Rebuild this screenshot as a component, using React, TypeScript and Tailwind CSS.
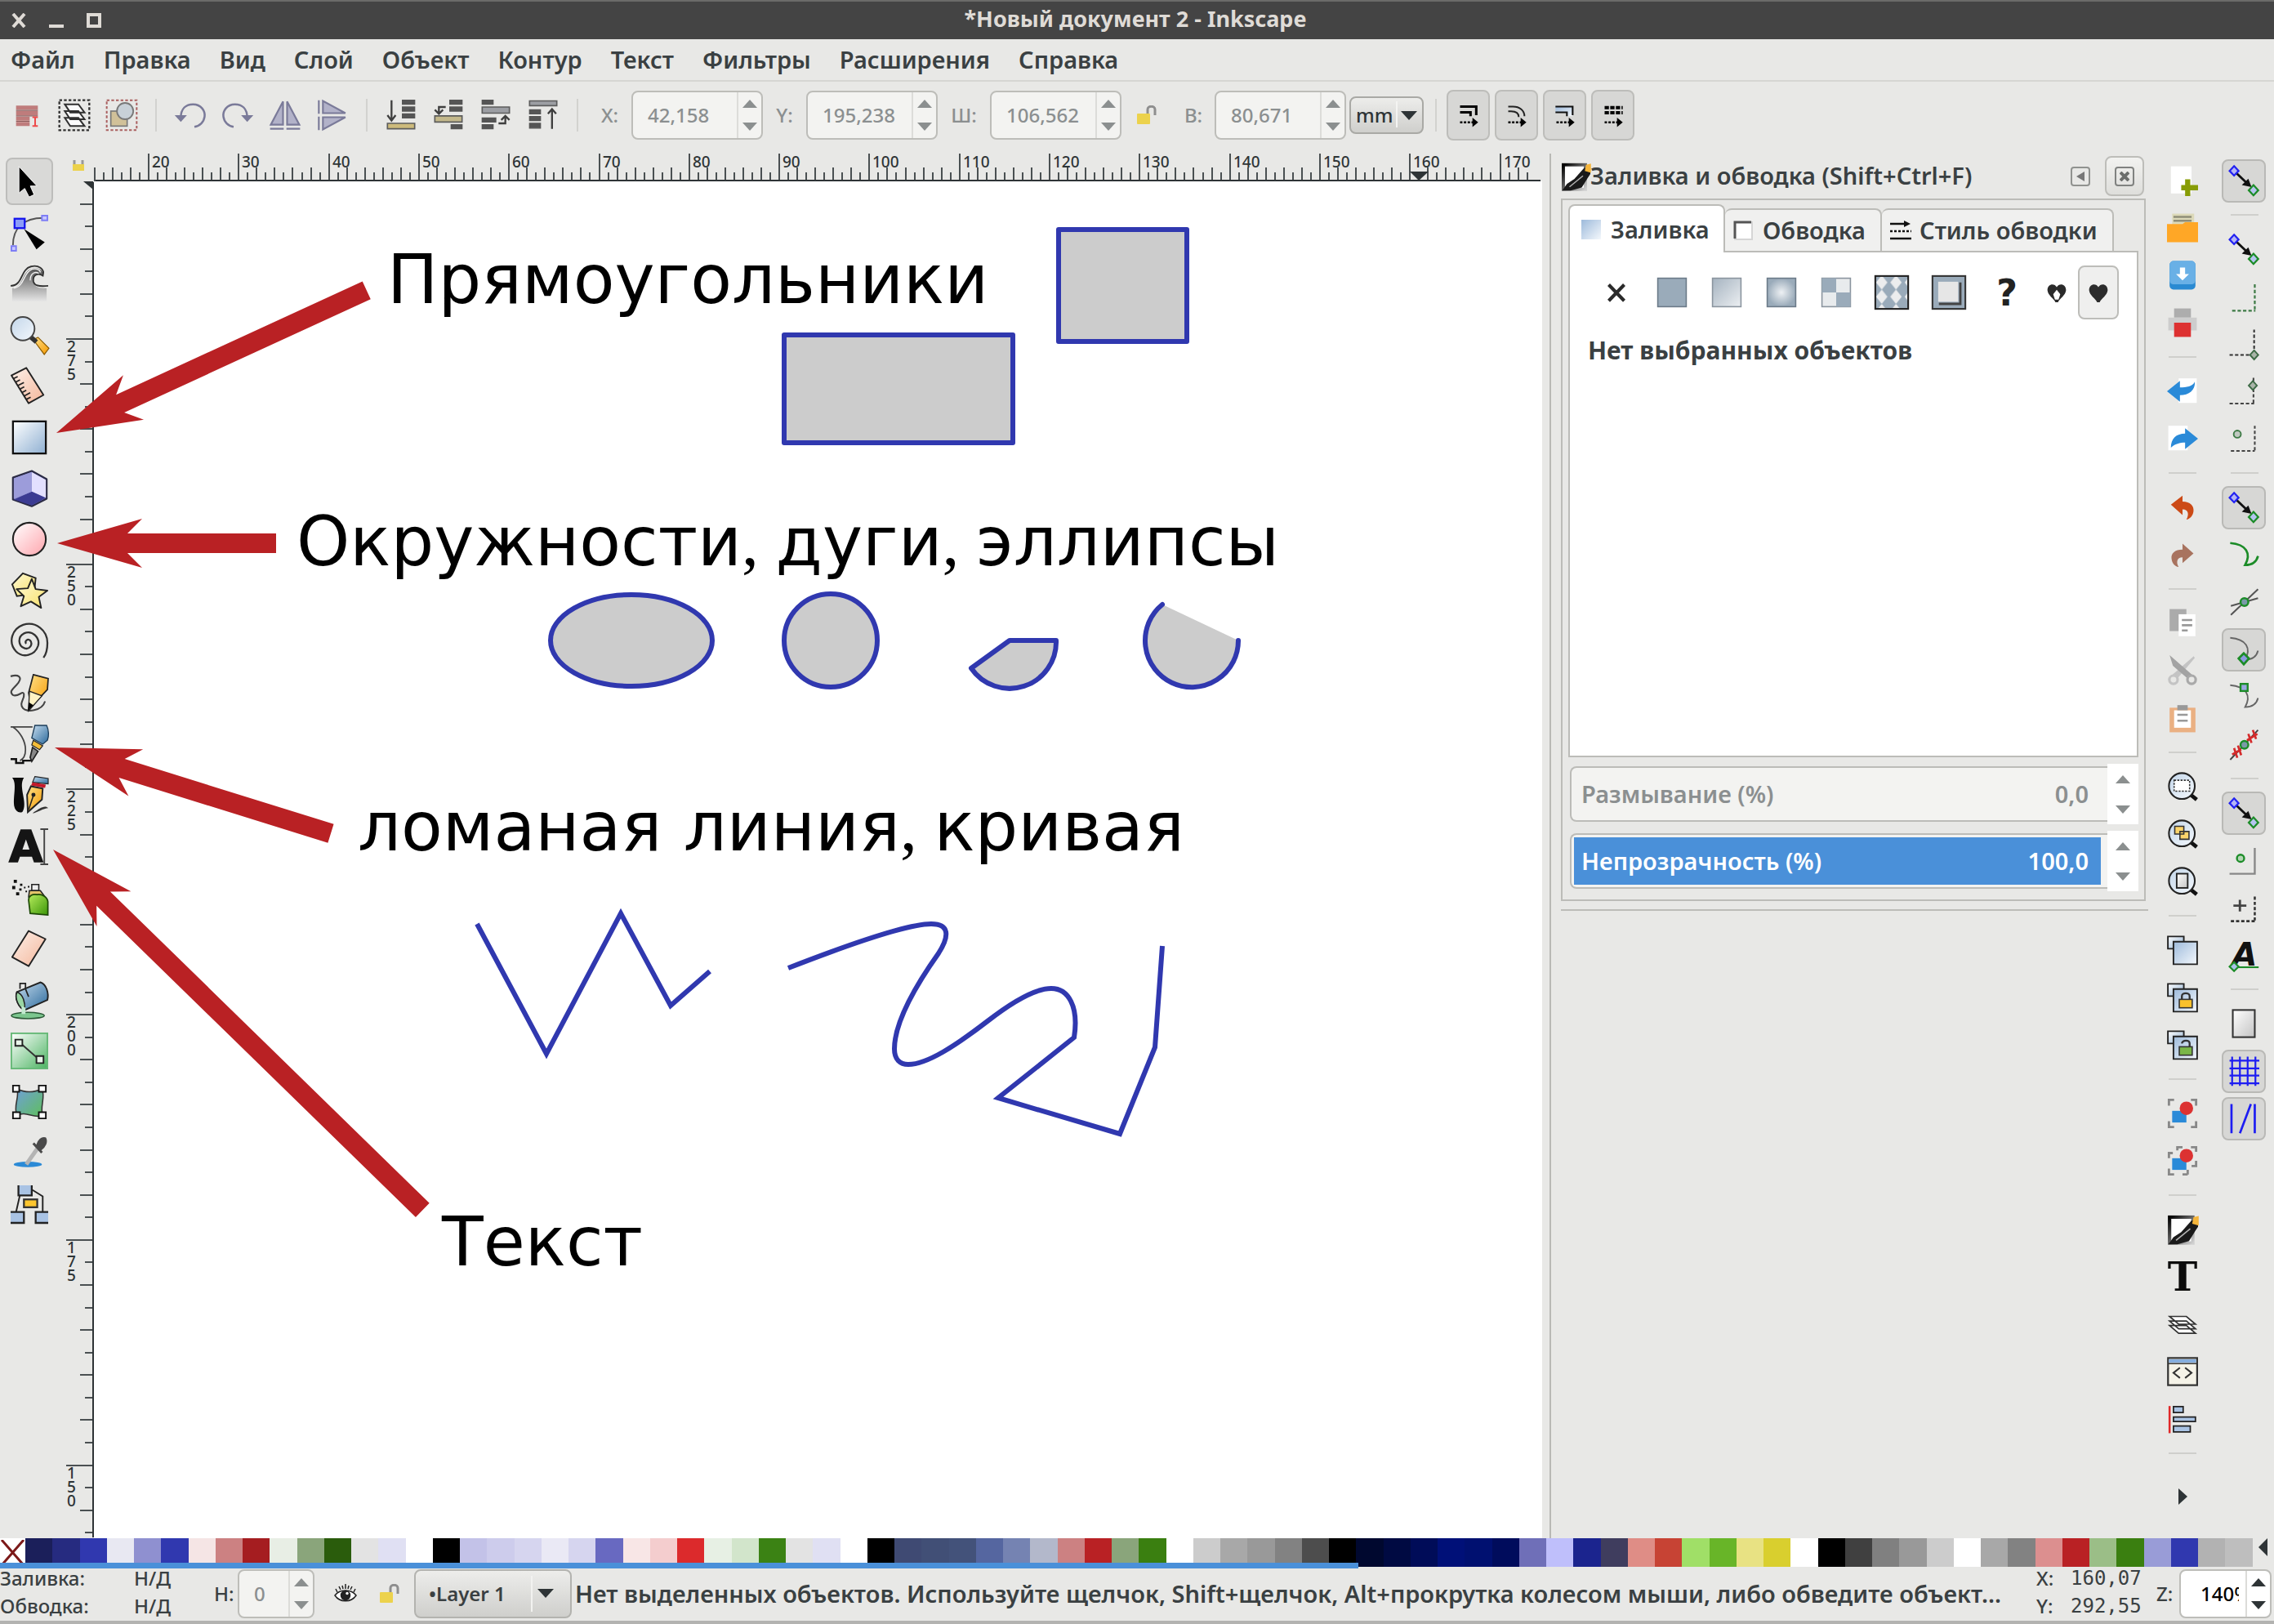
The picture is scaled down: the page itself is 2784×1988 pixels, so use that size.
import type { ReactNode } from "react";

const INK = "#2e3436";
const BLUE = "#3038af";
const RED = "#b92124";

function Icon({ children, className = "size-[46px]" }: { children: ReactNode; className?: string }) {
  return (
    <svg viewBox="0 0 24 24" className={"overflow-visible " + className} fill="none" stroke="none" aria-hidden="true">
      {children}
    </svg>
  );
}

function Gradients() {
  const lin = (id: string, a: string, b: string) => (
    <linearGradient id={id} x1="0" y1="0" x2="1" y2="1">
      <stop offset="0" stopColor={a} />
      <stop offset="1" stopColor={b} />
    </linearGradient>
  );
  return (
    <svg className="absolute size-0" aria-hidden="true">
      <defs>
        {lin("g-blue", "#ffffff", "#8fb0d2")}
        {lin("g-blue-r", "#9dbadb", "#f4f8fc")}
        {lin("g-lens", "#c3d6ea", "#f4f8fc")}
        {lin("g-pink", "#ffffff", "#ffa5ad")}
        {lin("g-yellow", "#fffbd8", "#f8e068")}
        {lin("g-orange", "#ffe08a", "#f59a00")}
        {lin("g-peach", "#fdf1ea", "#f4b69a")}
        {lin("g-green", "#ffffff", "#4db463")}
        {lin("g-mesh", "#6f9fd8", "#5fbf5c")}
        {lin("g-steel", "#c6dcee", "#2c6a9c")}
        {lin("g-spray", "#b6ec5c", "#3c9608")}
        {lin("g-page", "#ffffff", "#c4c4c4")}
        {lin("g-disabled", "#a5b3c0", "#eceff2")}
        {lin("g-frame", "#000000", "#d0d0d0")}
        <linearGradient id="g-wave" x1="0" y1="0" x2="0" y2="1">
          <stop offset="0" stopColor="#555" />
          <stop offset="1" stopColor="#e6e6e6" />
        </linearGradient>
        <radialGradient id="g-radial">
          <stop offset="0" stopColor="#eef1f4" />
          <stop offset="1" stopColor="#9aabba" />
        </radialGradient>
        <pattern id="p-check" width="10" height="10" patternUnits="userSpaceOnUse">
          <rect width="10" height="10" fill="#9aabba" />
          <path d="M5 0L9 5L5 10L1 5Z" fill="#ecedee" />
        </pattern>
      </defs>
    </svg>
  );
}

/* ---------- toolbox ---------- */

const tools: { name: string; art: ReactNode }[] = [
  { name: "Выделение", art: <path d="M5.300 2.500L5.300 19.500L9 16.500L11.800 22L15 20.500L12.600 15H16.800Z" fill="#000" stroke="#fff" strokeWidth=".5" /> },
  {
    name: "Узлы",
    art: (
      <>
        <path d="M1.500 20C1.500 9 8 2.500 21 2.500" stroke="#555" strokeWidth="1" />
        <path d="M.5 20.500H3.500V23.500H.5ZM20 1H23.500V4H20Z" fill="#c8c8ff" stroke="#7d7df5" strokeWidth="1" />
        <rect x="2.500" y="3" width="6.500" height="6" fill="#8c9cf8" stroke="#1414ee" strokeWidth="1.200" />
        <path d="M8.500 9.500L21.800 18L16.500 22.500Z" fill="#000" />
      </>
    ),
  },
  {
    name: "Корректор",
    art: (
      <>
        <path d="M1 15C8 15 7 4 14 2.500C18 1.500 21.500 4 20.500 7.500C18 5 14 6.500 14.500 10.500C15 14.500 18 15 23 15V23.500H1Z" fill="url(#g-wave)" />
        <path d="M0 13.500C8 13.500 6 3 13 1.200C17.500 0 22 2.500 20.600 7C17.500 5 14 6.500 14.500 10.500C15 13.500 18 14 24 13.500" stroke="#333" strokeWidth="1" />
        <path d="M2 15C9 14 8 5 13.500 3C16 2 19 3 19 5M12.500 10C12.500 6 15 4 18 5.500" stroke="#f2f2f2" strokeWidth=".7" />
      </>
    ),
  },
  {
    name: "Масштаб",
    art: (
      <>
        <path d="M14.500 15L17.500 13.500L24.500 20.500L21.500 24.500Z" fill="url(#g-orange)" stroke="#8a5a00" strokeWidth=".6" />
        <path d="M13 13.500L16.500 16.500" stroke="#333" strokeWidth="3" />
        <circle cx="7.800" cy="8" r="7.500" fill="url(#g-lens)" stroke="#444" strokeWidth="1" />
      </>
    ),
  },
  {
    name: "Измеритель",
    art: (
      <>
        <path d="M.5 5.500L10 .7L21 18L11.500 23.300Z" fill="url(#g-peach)" stroke="#222" strokeWidth="1" strokeLinejoin="round" />
        <path d="M1.800 7.600L4.500 6.300M3.200 9.800L6 8.400M4.600 12L8.500 10M6 14.200L8.700 12.800M7.300 16.400L10 15M8.700 18.600L12.500 16.600M10 20.800L12.800 19.400" stroke="#222" strokeWidth=".9" />
      </>
    ),
  },
  { name: "Прямоугольник", art: <rect x="1.500" y="2" width="21" height="20.500" fill="url(#g-blue)" stroke="#111" strokeWidth="1.200" /> },
  {
    name: "Параллелепипед",
    art: (
      <>
        <path d="M1.500 5L13.500 .8L23 6V18.500L13.500 23.300L1.500 19Z" fill="#8f8fd0" stroke="#2b2b45" strokeWidth="1.200" strokeLinejoin="round" />
        <path d="M13.500 1.500L22.500 6.500V18L13.500 14Z" fill="#e3e0ff" />
        <path d="M2 19L13.500 14L22.500 18L13.500 22.800Z" fill="#3b3b92" />
        <path d="M2 5.500L13.500 1.500V14L2 18.500Z" fill="#9c9cda" />
      </>
    ),
  },
  { name: "Эллипс", art: <circle cx="12" cy="12" r="10.500" fill="url(#g-pink)" stroke="#222" strokeWidth="1.100" /> },
  {
    name: "Звезда",
    art: (
      <>
        <path d="M1 8L7.800 1L16 4L15 14L4 15.500Z" fill="url(#g-yellow)" stroke="#222" strokeWidth="1" />
        <path d="M13.500 4.500L16 11L23.500 12L18 16L19.500 23L13 19L6.500 22L8.500 15.500L3.800 11L11 10.500Z" fill="url(#g-yellow)" stroke="#222" strokeWidth="1" strokeLinejoin="round" />
      </>
    ),
  },
  {
    name: "Спираль",
    art: <path d="M10 13.500C8.500 12 11 10 12.500 11.500C14.500 14 12 17.500 9 16.500C4.500 15 4.500 9 8.500 7C14 4.500 19 10 17.500 15C15.500 21 8 23 3.500 18.500C-2 12.500 1 4 8 1.500C16 -1 23.500 5 23.500 13C23.500 17.500 22.500 20.500 21 22.500" stroke="#333" strokeWidth="1.200" />,
  },
  {
    name: "Карандаш",
    art: (
      <>
        <path d="M0 1.500C5 0 7.500 2 5 5.500C2 9.500 -1.500 11 1.500 13.500C5 15 8 10 8.500 13C9 16 5 19 8 22C10 24.500 20 24 22 17.500" stroke="#444" strokeWidth="1.100" />
        <path d="M14.500 .5L24 3L23.500 10L13 21L11.500 12Z" fill="url(#g-orange)" stroke="#222" strokeWidth=".9" />
        <path d="M12 11L20 14L11.500 23.500Z" fill="#fff3c4" stroke="#222" strokeWidth=".7" />
        <path d="M11.500 18L14.500 20L11 23.500Z" fill="#000" />
      </>
    ),
  },
  {
    name: "Перо",
    art: (
      <>
        <path d="M0 1H14M1.500 1C6 4 9.500 10 9.500 15.500C9.500 19 8 21.500 6 22.500" stroke="#444" strokeWidth=".9" />
        <path d="M0 21.500H3.500V24H8V22.500H13" stroke="#111" strokeWidth="1.300" />
        <path d="M15.500 0H23C24.500 3 24.500 7 23.500 9.500L20.500 12L13.500 8Z" fill="url(#g-steel)" stroke="#1c3c58" strokeWidth=".7" />
        <path d="M14.500 9.500L20.500 13L18.500 15.500L13.500 12.500Z" fill="#f5bd38" stroke="#222" strokeWidth=".6" />
        <path d="M14 14L17.500 16.500L13.500 23L12.500 20.500Z" fill="#888" stroke="#222" strokeWidth=".9" />
      </>
    ),
  },
  {
    name: "Каллиграфия",
    art: (
      <>
        <path d="M1 1H8.500C4.500 7 11.500 17 7.500 23C5 24 3 22 2.500 20C1 14 4.500 5 1 1Z" fill="#0c0c0c" />
        <path d="M15 23C18 21 22 18 24 20.500C21 20.500 17 23.500 14 23.800Z" fill="#333" />
        <path d="M15.500 .3L24 1.500V5L14 4Z" fill="url(#g-steel)" stroke="#222" strokeWidth=".6" />
        <path d="M14 4L22.500 5.500L22 7.500L13 6Z" fill="#c3182a" />
        <path d="M13 6.500L20.500 8L20 15L11 23L10.500 12Z" fill="url(#g-orange)" stroke="#222" strokeWidth="1" />
        <path d="M11.500 21.500L14.500 12.500" stroke="#222" strokeWidth=".8" />
        <circle cx="14.600" cy="12" r="1.300" fill="#222" />
      </>
    ),
  },
  {
    name: "Текст",
    art: (
      <>
        <text x="-1" y="22" fontFamily="DejaVu Sans" fontWeight="700" fontSize="28" fill="#151515" stroke="#151515" strokeWidth=".8">A</text>
        <path d="M19 1H24M21.500 1V23.500M19 23.500H24" stroke="#444" strokeWidth="1" />
      </>
    ),
  },
  {
    name: "Распылитель",
    art: (
      <>
        <path d="M2 1h2v2h-2zM1 5h2v2h-2zM3.500 9h2v2h-2zM6 3.500h1.500v1.500h-1.500zM5.500 6.500h1.500v1.500h-1.500zM8.500 5.500h1v1h-1zM9.500 8h1v1h-1zM11 5h1v1h-1z" fill="#111" />
        <path d="M13.500 4H18V8H13.500Z" fill="#eee" stroke="#222" strokeWidth=".8" />
        <path d="M12 8H19L22 12H11.500Z" fill="#e3c36a" stroke="#222" strokeWidth=".8" />
        <path d="M11.500 14C11.500 11 14 10 17 10.500C20 10 23.500 12 23.800 15V23.500L12.500 22.500Z" fill="url(#g-spray)" stroke="#1d4a06" strokeWidth=".9" />
      </>
    ),
  },
  { name: "Ластик", art: <path d="M1 17.500L11.500 .8L22.300 6L11.500 23.300Z" fill="url(#g-peach)" stroke="#222" strokeWidth="1" strokeLinejoin="round" /> },
  {
    name: "Заливка",
    art: (
      <>
        <ellipse cx="11" cy="22" rx="10.500" ry="2" fill="#7cc68e" stroke="#2c5a38" strokeWidth=".8" />
        <path d="M4 7L19 .8C23 2 24.500 8 23.500 12L9 18.500C5 17 2.500 11 4 7Z" fill="url(#g-steel)" stroke="#222" strokeWidth="1" />
        <path d="M4 7C8 8 9.500 14 9 18.500C5 17 2.500 11 4 7Z" fill="#9ad6a4" stroke="#222" strokeWidth=".8" />
        <path d="M7 16V21H9.500V17" fill="#c3ead0" />
        <path d="M6 5V1.500H9.500V5L11.500 10" stroke="#222" strokeWidth=".9" />
      </>
    ),
  },
  {
    name: "Градиент",
    art: (
      <>
        <rect x=".5" y="1" width="23" height="22.500" fill="url(#g-green)" stroke="#67b978" strokeWidth="1" />
        <path d="M6 7L18.500 18" stroke="#333" strokeWidth="1" />
        <path d="M3 5H7.500V9H3ZM16.500 15.500H21V20H16.500Z" fill="#e8f4ea" stroke="#222" strokeWidth="1" />
      </>
    ),
  },
  {
    name: "Сетка градиента",
    art: (
      <>
        <path d="M4 3.500C9 6 15 6 20 3.500C22.500 9 18.500 15 20.500 20.500C15 23 10 17.500 4 20.500C1.500 14 6 9 4 3.500Z" fill="url(#g-mesh)" stroke="#333" strokeWidth=".8" />
        <path d="M1.500 1.500H5.500V5.500H1.500ZM18 1.500H22.500V5.500H18ZM1.500 18.500H6V22.500H1.500ZM18 18.500H22.500V22.500H18Z" fill="#fff" stroke="#111" strokeWidth="1" />
      </>
    ),
  },
  {
    name: "Пипетка",
    art: (
      <>
        <ellipse cx="11" cy="19.500" rx="9" ry="1.700" fill="#2b8ad6" />
        <path d="M10 19.500L17 9.500" stroke="#b4b4b4" strokeWidth="2.600" />
        <path d="M14.500 6L20 12M17 7.500C18 4 20 2.500 22 3C23 5 22 8 19 10Z" fill="#4a4a4a" stroke="#4a4a4a" strokeWidth="1.600" />
      </>
    ),
  },
  {
    name: "Линии соединения",
    art: (
      <>
        <path d="M6 6L3.500 17M14 3L20.500 7V17" stroke="#222" strokeWidth="1" />
        <path d="M5 0V6.500H13.500V0" fill="#a9c3e4" stroke="#222" strokeWidth="1.200" />
        <path d="M0 17H8.500V24H0" fill="#a9c3e4" stroke="#222" strokeWidth="1.200" />
        <path d="M24 17H16V24H24" fill="#a9c3e4" stroke="#222" strokeWidth="1.200" />
        <rect x="8.500" y="9" width="8.500" height="5" fill="#fdc62f" stroke="#333" strokeWidth="1.200" />
      </>
    ),
  },
];

function Toolbox() {
  return (
    <aside className="flex w-20 shrink-0 flex-col pt-[5px] pl-[7px]" aria-label="Инструменты">
      <div className="flex h-[1310px] flex-col justify-between">
        {tools.map((t, i) => (
          <button
            key={t.name}
            aria-label={t.name}
            className={
              i === 0
                ? "flex size-[58px] items-center justify-center rounded-lg border-2 border-[#bdbdbb] bg-[#d9d9d7]"
                : "flex size-[58px] items-center justify-center"
            }
          >
            <Icon>{t.art}</Icon>
          </button>
        ))}
      </div>
    </aside>
  );
}

/* ---------- top controls bar ---------- */

const bars = (a: string) => <path d={a} fill="#3c3c3c" stroke="#3c3c3c" strokeWidth=".8" />;

const controlGroups: { name: string; art: ReactNode }[][] = [
  [
    {
      name: "Выделить все",
      art: (
        <>
          <path d="M4 5H20V8H4ZM4 9H20V12H4ZM4 13H14V16H4ZM4 17H14V20H4Z" fill="#b96a6a" />
          <path d="M4 8.500H20M4 12.500H20M4 16.500H14" stroke="#7d4040" strokeWidth=".7" />
          <path d="M18 13V20M16 13.500H20M16 20H20" stroke="#ef3030" strokeWidth="1.200" />
        </>
      ),
    },
    {
      name: "Выделить все во всех слоях",
      art: (
        <>
          <rect x="1" y="1" width="22" height="22" stroke="#111" strokeWidth="1.400" strokeDasharray="2 1.400" />
          <path d="M5 14H15L19.500 20H9Z M5 9H15L19.500 15H9Z M5 4H15L19.500 10H9Z" fill="#fff" stroke="#111" strokeWidth="1.200" />
        </>
      ),
    },
    {
      name: "Снять выделение",
      art: (
        <>
          <rect x="1" y="1" width="22" height="22" stroke="#a04848" strokeWidth="1.200" strokeDasharray="2 1.400" />
          <rect x="4" y="9" width="12" height="11" fill="#cdbb8c" stroke="#666" strokeWidth="1" />
          <circle cx="14.500" cy="9" r="6" fill="#c3ced6" stroke="#666" strokeWidth="1.100" />
        </>
      ),
    },
  ],
  [
    {
      name: "Повернуть влево",
      art: (
        <>
          <path d="M5 14C5 7 9 4 14 4C20 4 23 9 22.500 13C22 17 19 20 15 20.500" stroke="#67678c" strokeWidth="1.500" />
          <path d="M.5 12H9.500L5 17Z" fill="#67678c" />
        </>
      ),
    },
    {
      name: "Повернуть вправо",
      art: (
        <>
          <path d="M19 14C19 7 15 4 10 4C4 4 1 9 1.500 13C2 17 5 20 9 20.500" stroke="#67678c" strokeWidth="1.500" />
          <path d="M23.500 12H14.500L19 17Z" fill="#67678c" />
        </>
      ),
    },
    {
      name: "Отразить горизонтально",
      art: <path d="M10.500 2V19H1.500ZM13.500 2V19H22.500ZM1 22H11M13 22H23" fill="#a9a9c4" stroke="#67678c" strokeWidth="1.300" />,
    },
    {
      name: "Отразить вертикально",
      art: <path d="M5 10.500V1.500L21.500 10.500ZM5 13.500V22.500L21.500 13.500ZM2 1V11M2 13V23" fill="#a9a9c4" stroke="#67678c" strokeWidth="1.300" />,
    },
  ],
  [
    {
      name: "Опустить на задний план",
      art: (
        <>
          {bars("M13 1H22V4H13ZM13 6H22V9H13ZM13 11H22V14H13Z")}
          <path d="M2 18H22V22H2Z" fill="#c9b46a" stroke="#444" />
          <path d="M5 1V15M2 12L5 16L8 12" stroke="#222" strokeWidth="1.400" />
        </>
      ),
    },
    {
      name: "Опустить",
      art: (
        <>
          {bars("M13 1H22V4H13ZM13 6H22V9H13ZM14 19H22V22H14Z")}
          <path d="M2 12.500H22V17H2Z" fill="#bdb07c" stroke="#444" />
          <path d="M10 6H5V10M2 8L5 11L8 8" stroke="#222" strokeWidth="1.400" />
        </>
      ),
    },
    {
      name: "Поднять",
      art: (
        <>
          {bars("M2 1H10V4H2ZM2 14H12V17H2ZM2 19H10V22H2Z")}
          <path d="M2 6H22V10.500H2Z" fill="#8f9298" stroke="#444" />
          <path d="M14 18H19V13M16 15.500L19 12.500L22 15.500" stroke="#222" strokeWidth="1.400" />
        </>
      ),
    },
    {
      name: "Поднять на передний план",
      art: (
        <>
          {bars("M2 8H10V11H2ZM2 13H10V16H2ZM2 18H10V21.500H2Z")}
          <path d="M2 1.500H22V5H2Z" fill="#8f9298" stroke="#444" />
          <path d="M18.500 22V8M15.500 11L18.500 7.500L21.500 11" stroke="#222" strokeWidth="1.400" />
        </>
      ),
    },
  ],
];

const affect: { name: string; art: ReactNode }[] = [
  { name: "Менять толщину обводки", art: <path d="M3 3H20V12M3 9H14V13" stroke="#000" strokeWidth="2.600" /> },
  { name: "Менять радиус закругления", art: <path d="M3 3H8C15 3 20 7 20 13M3 8H6C11 8 14 10 14 14" stroke="#222" strokeWidth="1.700" /> },
  {
    name: "Преобразовывать градиенты",
    art: (
      <>
        <path d="M2 3H20V13H14V9H2Z" fill="url(#g-blue-r)" />
        <path d="M2 3H20V12M2 9H14V13" stroke="#111" strokeWidth="1.800" />
      </>
    ),
  },
  { name: "Преобразовывать текстуры", art: <path d="M3 4H22M3 9.500H22" stroke="#000" strokeWidth="3.400" strokeDasharray="4.500 1.400" /> },
];

const Divider = () => (
  <div className="flex w-[26px] shrink-0 justify-center">
    <div className="h-10 w-0.5 bg-[#d2d2cf]" />
  </div>
);

function Arrows({ dark = false }: { dark?: boolean }) {
  const fill = dark ? INK : "#8b8f8f";
  return (
    <span className="flex h-full flex-col">
      <button aria-label="Увеличить" className="flex flex-1 items-center justify-center">
        <svg viewBox="0 0 18 10" className="h-2.5 w-[18px]" aria-hidden="true"><path d="M9 0L18 10H0Z" fill={fill} /></svg>
      </button>
      <button aria-label="Уменьшить" className="flex flex-1 items-center justify-center">
        <svg viewBox="0 0 18 10" className="h-2.5 w-[18px]" aria-hidden="true"><path d="M9 10L18 0H0Z" fill={fill} /></svg>
      </button>
    </span>
  );
}

function Spin({ id, value, width, active = false }: { id: string; value: string; width: string; active?: boolean }) {
  return (
    <div
      className={
        (active ? "bg-white text-black " : "bg-[#f3f3f1] text-[#8b8f90] ") +
        "flex h-[60px] overflow-hidden rounded-lg border-2 border-[#bdbdb9] text-2xl font-medium " + width
      }
    >
      <input id={id} defaultValue={value} className={(active ? "pr-2 pl-6 " : "pl-[18px] ") + "w-0 min-w-0 flex-1 bg-transparent outline-none"} />
      <div className="w-[30px] border-l-2 border-[#dcdcd9]">
        <Arrows dark={active} />
      </div>
    </div>
  );
}

const Lock = () => (
  <svg viewBox="0 0 24 24" className="size-6" aria-hidden="true">
    <path d="M13 11V5C13 0 22 0 22 5V12" fill="none" stroke="#8e8e8e" strokeWidth="3" />
    <rect y="10" width="16" height="13" rx="1" fill="#ecd24c" />
  </svg>
);

function ControlsBar() {
  const label = "shrink-0 text-center text-2xl font-medium text-[#8b8f90]";
  return (
    <div className="flex h-22 shrink-0 items-center pr-4 pb-1.5 pl-1">
      {controlGroups.map((g, i) => (
        <div key={i} className="flex items-center">
          {g.map((c) => (
            <button key={c.name} aria-label={c.name} className="flex h-[58px] w-[58px] items-center justify-center">
              <Icon className="size-[40px] opacity-85">{c.art}</Icon>
            </button>
          ))}
          <Divider />
        </div>
      ))}
      <label htmlFor="x" className={label + " w-[53px]"}>X:</label>
      <Spin id="x" value="42,158" width="w-[161px]" />
      <label htmlFor="y" className={label + " w-[53px]"}>Y:</label>
      <Spin id="y" value="195,238" width="w-[161px]" />
      <label htmlFor="w" className={label + " w-16"}>Ш:</label>
      <Spin id="w" value="106,562" width="w-[161px]" />
      <button aria-label="Сохранять пропорции" className="flex w-[62px] justify-center"><Lock /></button>
      <label htmlFor="h" className={label + " w-[52px]"}>В:</label>
      <Spin id="h" value="80,671" width="w-[161px]" />
      <div className="relative mr-0.5 ml-1 h-[46px] w-[91px] shrink-0">
        <select aria-label="Единицы" className="size-full appearance-none rounded-lg border-2 border-[#a9a9a5] bg-linear-to-b from-[#ededeb] to-[#cfcfcc] pl-1.5 text-2xl leading-none font-medium text-[#2e3436]">
          <option>mm</option>
        </select>
        <span className="pointer-events-none absolute top-1.5 right-8 h-8 w-0.5 bg-[#f4f4f2]" />
        <svg viewBox="0 0 20 11" className="pointer-events-none absolute top-[18px] right-2 h-[11px] w-5" aria-hidden="true"><path d="M0 0H20L10 11Z" fill={INK} /></svg>
      </div>
      <Divider />
      <div className="flex gap-1.5">
        {affect.map((a) => (
          <button key={a.name} aria-label={a.name} className="flex h-[62px] w-[53px] items-center justify-center rounded-lg border-2 border-[#bdbdba] bg-[#d7d7d5]">
            <Icon className="size-7">
              {a.art}
              <path d="M3 19.500H18" stroke="#000" strokeWidth="2" strokeDasharray="2.500 1.500" />
              <path d="M16 14.500L22 19.500L16 24.500Z" fill="#000" />
            </Icon>
          </button>
        ))}
      </div>
    </div>
  );
}

/* ---------- rulers ---------- */

const UNIT = 11.03;

function TopRuler() {
  const ticks: ReactNode[] = [];
  for (let u = 14; u <= 173; u++) {
    const x = Math.round(102 + (u - 20) * UNIT);
    const major = u % 10 === 0;
    ticks.push(<path key={u} d={`M${x} 34V${major ? 0 : u % 2 === 0 ? 17 : 23}`} />);
    if (major)
      ticks.push(<text key={"t" + u} x={x + 4} y="17" fontSize="19" fontWeight="500" stroke="none" fill={INK}>{u}</text>);
  }
  return (
    <svg className="h-[34px] w-full shrink-0 overflow-visible" stroke="#4a5052" strokeWidth="2" aria-label="Горизонтальная линейка">
      {ticks}
      <path d="M37 33H1806" stroke={INK} />
      <path d="M1646 22H1669L1657 33Z" fill={INK} stroke="none" />
      <path d="M11 8V15M21 8V15" stroke="#999" strokeWidth="3" />
      <rect x="9" y="13" width="14" height="8" fill="#ecd24c" stroke="none" />
    </svg>
  );
}

function SideRuler() {
  const ticks: ReactNode[] = [];
  const labels: ReactNode[] = [];
  for (let i = -7; i <= 53; i++) {
    const y = Math.round(193 + i * 27.57);
    const major = i % 10 === 0;
    ticks.push(<path key={i} d={`M34 ${y}H${major ? 1 : i % 2 === 0 ? 18 : 24}`} />);
    if (major)
      labels.push(
        <span key={i} className="absolute left-0.5 w-[11px] text-[19px] leading-[17px] font-medium break-all text-[#2e3436]" style={{ top: y + 1 }}>
          {275 - i * 2.5}
        </span>
      );
  }
  return (
    <div className="relative w-[35px] shrink-0" aria-label="Вертикальная линейка">
      <svg className="size-full" stroke="#4a5052" strokeWidth="2" aria-hidden="true">
        {ticks}
        <path d="M34 1V1660" stroke={INK} />
        <path d="M22 0H34V10Z" fill={INK} stroke="none" />
      </svg>
      {labels}
    </div>
  );
}

/* ---------- drawing ---------- */

function Arrow({ x, y, angle, length }: { x: number; y: number; angle: number; length: number }) {
  return (
    <path
      transform={`translate(${x} ${y}) rotate(${angle})`}
      d={`M0 0L104 -30L86 -12H${length}V12H86L104 30Z`}
      fill={RED}
    />
  );
}

const Comma = () => <tspan fontFamily="Liberation Serif, serif" xmlSpace="preserve">{", "}</tspan>;

function Drawing() {
  return (
    <svg viewBox="0 188 1900 1694" className="pointer-events-none absolute top-0 left-0 h-[1694px] w-[1900px]">
      <g fill="#ccc" stroke={BLUE} strokeWidth="6" strokeLinejoin="round" strokeLinecap="round">
        <rect x="1296" y="281" width="157" height="137" />
        <rect x="960" y="410" width="280" height="132" />
        <ellipse cx="773" cy="784" rx="99" ry="56" />
        <circle cx="1017" cy="784" r="57" />
        <path d="M1236 784H1293A57 57 0 0 1 1189 818Z" />
        <path d="M1516 784A57 57 0 1 1 1423 740" />
      </g>
      <g fill="none" stroke={BLUE} strokeWidth="6">
        <path d="M584 1131L669 1290L760 1118L821 1231L869 1189" />
        <path d="M965 1185C1060 1148 1115 1131 1140 1131C1162 1131 1163 1145 1149 1167C1115 1215 1095 1255 1095 1284C1095 1297 1102 1303 1112 1303C1135 1303 1170 1280 1209 1250C1240 1226 1268 1210 1287 1210C1308 1210 1321 1232 1315 1270L1222 1344L1371 1388L1414 1282L1423 1158" />
      </g>
      <g fontFamily="DejaVu Sans, sans-serif" fontSize="83" fill="#000">
        <text x="474" y="371">Прямоугольники</text>
        <text x="363" y="692">Окружности<Comma />дуги<Comma />эллипсы</text>
        <text x="438" y="1041">ломаная линия<Comma />кривая</text>
        <text x="541" y="1549">Текст</text>
      </g>
      <Arrow x={69} y={530} angle={-24.7} length={418} />
      <Arrow x={70} y={665} angle={0} length={268} />
      <Arrow x={67} y={915} angle={17.3} length={354} />
      <Arrow x={65} y={1040} angle={44.3} length={632} />
    </svg>
  );
}

/* ---------- fill and stroke panel ---------- */

const PaintIcon = () => (
  <>
    <rect x="2" y="2.500" width="18" height="20" fill="#fff" stroke="url(#g-frame)" strokeWidth="2.600" />
    <path d="M24 5.500L19 5L11 14L5 18L1 23.500H8L17 21L22 13L24 10Z" fill="#1a1a1a" />
    <path d="M20.500 2.500L24.500 1.500V9L19.500 7.500Z" fill="#f5b53a" />
    <path d="M7 20.500L18 11.500" stroke="#b5b5b5" strokeWidth="1" />
  </>
);

const heart = "M12 6C14.500 1 22.500 2 22.500 9.500C22 15.500 15 19 13.500 23H10.500C9 19 2 15.500 1.500 9.500C1.500 2 9.500 1 12 6Z";

const paints: { name: string; width: string; art: ReactNode }[] = [
  { name: "Нет заливки", width: "w-[69px]", art: <path d="M6 6L18 18.500M18 6L6 18.500" stroke="#2a2a2a" strokeWidth="2.600" /> },
  { name: "Сплошной цвет", width: "w-[67px]", art: <rect x="1" y="1" width="22" height="22" fill="#9aabba" stroke="#6b7a88" /> },
  { name: "Линейный градиент", width: "w-[67px]", art: <rect x="1" y="1" width="22" height="22" fill="url(#g-disabled)" stroke="#8a949e" /> },
  { name: "Радиальный градиент", width: "w-[67px]", art: <rect x="1" y="1" width="22" height="22" fill="url(#g-radial)" stroke="#6b7a88" /> },
  { name: "Градиентная сетка", width: "w-[67px]", art: <><rect x="1" y="1" width="22" height="22" fill="#e8ebed" stroke="#8a949e" /><path d="M1 1H12V12H1ZM12 12H23V23H12Z" fill="#9aabba" /></> },
  { name: "Текстура", width: "w-[69px]", art: <rect x=".5" y=".5" width="23" height="23" fill="url(#p-check)" stroke="#222" strokeWidth="1.200" /> },
  { name: "Образец", width: "w-[71px]", art: <><rect x=".5" y=".5" width="23" height="23" fill="#9aabba" stroke="#333" strokeWidth="1.200" /><path d="M20 5V20H5" stroke="#444" strokeWidth="1.600" /><rect x="4.500" y="4.500" width="14" height="14" fill="#e6e6e6" /></> },
  { name: "Не определено", width: "w-[71px]", art: <text x="4" y="22" fontFamily="DejaVu Sans" fontWeight="700" fontSize="28" fill="#222">?</text> },
  { name: "Чётно-нечётное", width: "w-[52px]", art: <><path d={heart} fill="#2a2a2a" /><path d="M12 9L16 14L14 20H10L8 14Z" fill="#fff" /></> },
];

function DockPanel() {
  const tab = "flex items-center border-2 border-[#bcbcb8] rounded-t-lg text-[29px] font-semibold";
  return (
    <section className="w-[735px] shrink-0 border-l-2 border-[#b9b9b5] pr-[2px] pl-3" aria-label="Заливка и обводка">
      <header className="flex h-[55px] items-center">
        <Icon className="size-9"><PaintIcon /></Icon>
        <h2 className="flex-1 pb-0.5 text-[29px] font-semibold whitespace-nowrap">Заливка и обводка (Shift+Ctrl+F)</h2>
        <button aria-label="Свернуть" className="mr-[18px] flex size-6 items-center justify-center rounded border-2 border-[#90928f]">
          <svg viewBox="0 0 10 12" className="h-3 w-2.5" aria-hidden="true"><path d="M10 0V12L0 6Z" fill="#777" /></svg>
        </button>
        <button aria-label="Закрыть" className="mr-[5px] flex h-[49px] w-12 items-center justify-center rounded-lg border-2 border-[#bdbdb9] bg-linear-to-b from-[#f2f2f0] to-[#dededb]">
          <span className="flex size-6 items-center justify-center rounded border-2 border-[#808280]">
            <svg viewBox="0 0 12 12" className="size-3" aria-hidden="true"><path d="M1 1L11 11M11 1L1 11" stroke="#6c6e6c" strokeWidth="4" /></svg>
          </span>
        </button>
      </header>
      <div className="mr-[3px] border-2 border-[#bcbcb8] px-[7px] pt-[5px] pb-2.5">
        <div role="tablist" className="flex items-end">
          <button role="tab" aria-selected="true" className={tab + " relative -mb-0.5 h-[59px] w-[192px] gap-3 border-b-0 bg-white pl-3.5"}>
            <svg viewBox="0 0 24 24" className="size-6" aria-hidden="true"><rect width="24" height="24" fill="url(#g-blue-r)" /></svg>
            Заливка
          </button>
          <button role="tab" aria-selected="false" className={tab + " h-[52px] w-[192px] gap-3 border-b-0 border-l-0 bg-[#f0f0ef] pl-2.5"}>
            <svg viewBox="0 0 24 24" className="size-6" aria-hidden="true"><rect x="2" y="2" width="21" height="21" fill="#fff" stroke="#d5d5d5" strokeWidth="2" /><path d="M2 22V2H22" fill="none" stroke="#555" strokeWidth="3" /></svg>
            Обводка
          </button>
          <button role="tab" aria-selected="false" className={tab + " h-[52px] w-[284px] gap-2.5 border-b-0 border-l-0 bg-[#f0f0ef] pl-2.5"}>
            <svg viewBox="0 0 26 24" className="h-6 w-[26px]" fill="none" stroke="#111" strokeWidth="2.500" aria-hidden="true"><path d="M0 4H20M0 22H26" /><path d="M0 13H26" strokeDasharray="3 2" /><path d="M17 0L25 4L17 8Z" fill="#111" stroke="none" /></svg>
            Стиль обводки
          </button>
        </div>
        <div role="tabpanel" className="h-[620px] border-2 border-[#bcbcb8] bg-white pt-4">
          <div className="flex items-center pl-[22px]">
            {paints.map((p) => (
              <button key={p.name} aria-label={p.name} className={"flex h-[66px] items-center justify-center " + p.width}>
                <Icon className={p.name === "Текстура" || p.name === "Образец" ? "size-[42px]" : p.name === "Чётно-нечётное" ? "size-[26px]" : "size-[38px]"}>{p.art}</Icon>
              </button>
            ))}
            <button aria-label="Сплошное" className="flex h-[66px] w-[50px] items-center justify-center rounded-lg border-2 border-[#bdbdb9] bg-[#efefee]">
              <Icon className="size-[26px]"><path d={heart} fill="#2c2c2c" /></Icon>
            </button>
          </div>
          <p className="mt-[18px] pl-[22px] text-[30px] leading-10 font-bold">Нет выбранных объектов</p>
        </div>
        <div className="mt-2 flex h-[74px] items-center">
          <div className="ml-0.5 flex h-[68px] flex-1 items-center rounded-l-lg border-2 border-r-0 border-[#bcbcb8] bg-[#f3f3f1] pr-[23px] pl-3 text-[29px] font-semibold text-[#8b8f90]">
            <label htmlFor="blur" className="flex-1">Размывание (%)</label>
            <input id="blur" defaultValue="0,0" className="w-24 bg-transparent text-right outline-none" />
          </div>
          <div className="h-full w-[38px] bg-white"><Arrows /></div>
        </div>
        <div className="mt-2 flex h-[74px] items-center">
          <div className="ml-0.5 flex h-[68px] flex-1 items-center rounded-l-lg border-2 border-r-0 border-[#bcbcb8] bg-[#f3f3f1] pr-2 pl-[3px] text-[29px] font-semibold text-white">
            <div className="flex h-[58px] flex-1 items-center bg-[#4a90d9] pr-[15px] pl-[9px]">
              <label htmlFor="opacity" className="flex-1">Непрозрачность (%)</label>
              <input id="opacity" defaultValue="100,0" className="w-24 bg-transparent text-right outline-none" />
            </div>
          </div>
          <div className="h-full w-[38px] bg-white"><Arrows /></div>
        </div>
      </div>
      <div className="mt-2.5 h-0.5 bg-[#bcbcb8]" />
    </section>
  );
}

/* ---------- right bars ---------- */

const Lens = ({ children }: { children: ReactNode }) => (
  <>
    <path d="M18 18L23 22" stroke="#111" strokeWidth="3" />
    <circle cx="11.500" cy="11.500" r="10" fill="url(#g-lens)" stroke="#222" strokeWidth="1.300" />
    {children}
  </>
);

const Copies = ({ children }: { children?: ReactNode }) => (
  <>
    <path d="M.7 1.500H13V11H.7Z" fill="url(#g-blue)" stroke="#222" strokeWidth="1.200" />
    <path d="M5 5.500H23.300V23H5Z" fill="url(#g-blue-r)" stroke="#222" strokeWidth="1.200" />
    {children}
  </>
);

const Shapes = () => (
  <>
    <rect x="4" y="10" width="11" height="9" fill="#2a8ad8" />
    <circle cx="15" cy="8" r="5.200" fill="#dc3232" />
  </>
);

const commands: { name: string; art: ReactNode }[][] = [
  [
    { name: "Создать", art: <><path d="M3 1H19V22H3Z" fill="#fff" /><path d="M14 11H18V15.500H24V19.500H18V24H14V19.500H11V15.500H14Z" fill="#879c05" /></> },
    { name: "Открыть", art: <><path d="M4 1H21V10H4Z" fill="#dcd9b8" /><path d="M5 3.500H19M5 6.500H19" stroke="#8f8e78" strokeWidth="1.500" /><path d="M0 9H12L14 7.500H24V23H0Z" fill="#ffa726" /></> },
    { name: "Сохранить", art: <><rect x="2" y="1" width="20" height="22" rx="3" fill="#2a8ad2" /><rect x="2" y="1" width="20" height="18" rx="3" fill="#69b0e6" /><path d="M10 6H14V11H17L12 16L7 11H10Z" fill="#fff" /></> },
    { name: "Печать", art: <><path d="M1 8H23V18H1Z" fill="#cdcdcd" /><path d="M5.500 1H18.500V8H5.500Z" fill="#adadad" /><path d="M5.500 12H18.500V23H5.500Z" fill="#dd3131" /></> },
  ],
  [
    { name: "Импортировать", art: <><path d="M9 2H23V21H9Z" fill="#fff" /><path d="M0 12L10 4V9C15 9 20 8 21.500 4.500C22 11 17 15 10 15V20Z" fill="#2a8ad8" /></> },
    { name: "Экспортировать", art: <><path d="M1 2H16V21H1Z" fill="#fff" /><path d="M24 12L14 4V8C7 8 3 12 3 19C6 16 10 15 14 15V20Z" fill="#2a8ad8" /></> },
  ],
  [
    { name: "Отменить", art: <path d="M3 10L12 3V7.500C18 7.500 21 11 20.500 15C20 19 17.500 21 15 21.500C17 18 17 13.500 12 13.500V18Z" fill="#cc4a16" /> },
    { name: "Повторить", art: <path d="M20.500 11L12 3.500V8C6 8 3 11 3.500 15C4 19 6 21 9 21.500C7 18 7.500 14 12 14V18.500Z" fill="#a8735f" /> },
  ],
  [
    { name: "Копировать", art: <><path d="M2 1H15V18H2Z" fill="#ababab" /><path d="M9 5H22V22H9Z" fill="#fff" /><path d="M11.500 9.500H19.500M11.500 13.500H19.500M11.500 17.500H16" stroke="#999" strokeWidth="1.600" /></> },
    { name: "Вырезать", art: <><path d="M21 1.500L8 17L5.500 15Z" fill="#c4c4c4" stroke="#c4c4c4" strokeWidth="1.500" /><path d="M3 1.500L18.500 15L16 17.500L5 8Z" fill="#a3a3a3" stroke="#a3a3a3" strokeWidth="1" /><circle cx="5" cy="19" r="3.200" stroke="#c4c4c4" strokeWidth="2" /><circle cx="19" cy="19" r="3.200" stroke="#a9a9a9" strokeWidth="2" /></> },
    { name: "Вставить", art: <><path d="M2 4H22V23H2Z" fill="#eab082" /><path d="M5.500 6H18.500V19.500H5.500Z" fill="#fff" /><path d="M8 2H16V6H8Z" fill="#999" /><path d="M8 9.500H16M8 14H16" stroke="#999" strokeWidth="1.600" /></> },
  ],
  [
    { name: "Масштаб по выделению", art: <Lens><rect x="5.500" y="7" width="12" height="8.500" fill="#fff" stroke="#333" strokeDasharray="1.500 1" /></Lens> },
    { name: "Масштаб по рисунку", art: <Lens><path d="M6 6H13V12H6ZM10 10H17V16H10Z" fill="#fbd46c" stroke="#333" /></Lens> },
    { name: "Масштаб по странице", art: <Lens><rect x="7.500" y="6" width="8.500" height="11" fill="url(#g-page)" stroke="#222" strokeWidth="1.200" /></Lens> },
  ],
  [
    { name: "Дублировать", art: <Copies /> },
    { name: "Создать клон", art: <Copies><path d="M11.500 14V11C11.500 8 17.500 8 17.500 11V14" stroke="#333" strokeWidth="1.500" /><rect x="9.500" y="13.500" width="10" height="6.500" fill="#f8c12d" stroke="#333" /></Copies> },
    { name: "Отсоединить клон", art: <Copies><path d="M11.500 11C12 8 17.500 8 17.500 11V14" stroke="#333" strokeWidth="1.500" /><rect x="9.500" y="13.500" width="10" height="6.500" fill="#7ab648" stroke="#333" /></Copies> },
  ],
  [
    { name: "Сгруппировать", art: <><path d="M1.500 6V1.500H5.500M18.500 1.500H22.500V6M1.500 18V22.500H5.500M18.500 22.500H22.500V18" stroke="#888" strokeWidth="1.800" /><Shapes /></> },
    { name: "Разгруппировать", art: <><path d="M1.500 10V6H4.500M8 4V1.500H12M18.500 1.500H22.500V5M1.500 18V22.500H5.500M12 22.500H16M16 22.500V19M19 16H22.500V12" stroke="#888" strokeWidth="1.800" /><Shapes /></> },
  ],
  [
    { name: "Заливка и обводка", art: <PaintIcon /> },
    { name: "Текст и шрифт", art: <text x="12" y="23" textAnchor="middle" fontFamily="DejaVu Serif, DejaVu Sans" fontWeight="700" fontSize="31" fill="#0c0c0c">T</text> },
    { name: "Слои", art: <path d="M2 13H15L22 19H9ZM2 9.500H15L22 15.500H9ZM2 6H15L22 12H9Z" fill="#fff" stroke="#333" strokeWidth="1.100" /> },
    { name: "Редактор XML", art: <><rect x=".8" y="1.500" width="22.500" height="21" fill="#f5f3e8" stroke="#333" strokeWidth="1.400" /><path d="M1.500 2.500H22.500V5H1.500Z" fill="#86aede" /><path d="M1 5.800H23" stroke="#333" /><path d="M10 9L5 13L10 17M14 9L19 13L14 17" stroke="#333" strokeWidth="1.300" /></> },
    { name: "Выровнять", art: <><path d="M2 2V23" stroke="#e02828" strokeWidth="1.600" /><path d="M5 2.500H12.500V7H5ZM5 10.500H22V14H5ZM5 17.500H18V22H5Z" fill="#a9c3e4" stroke="#222" strokeWidth="1.100" /></> },
  ],
];

const SideDivider = () => (
  <div className="flex h-[26px] items-center justify-center">
    <div className="h-0.5 w-[34px] bg-[#cfcfcc]" />
  </div>
);

function CommandBar() {
  return (
    <aside className="flex w-20 shrink-0 flex-col pt-1" aria-label="Команды">
      {commands.map((g, i) => (
        <div key={i}>
          {g.map((c) => (
            <button key={c.name} aria-label={c.name} className="flex h-[58px] w-full items-center justify-center">
              <Icon className="size-[38px]">{c.art}</Icon>
            </button>
          ))}
          <SideDivider />
        </div>
      ))}
      <button aria-label="Ещё" className="flex h-[50px] items-end justify-center">
        <svg viewBox="0 0 11 20" className="h-5 w-[11px]" aria-hidden="true"><path d="M0 0L11 10L0 20Z" fill={INK} /></svg>
      </button>
    </aside>
  );
}

const SnapArt = () => (
  <>
    <path d="M6 6L15 14.500" stroke="#111" strokeWidth="1.800" />
    <path d="M18 17L10.500 15.500L15.500 10.500Z" fill="#111" />
    <path d="M4.500 .8L8 4.500L4.500 8.200L1 4.500Z" fill="#b5b5f5" stroke="#2222f2" strokeWidth="1.400" />
    <path d="M19.500 15.500L23.200 19.500L19.500 23.500L15.800 19.500Z" fill="#b5c5f0" stroke="#1c8c28" strokeWidth="1.400" />
  </>
);
const curve = "M1.500 3C14 4 18 11 13 20C19 20 22 17 23 13";

const snaps: { name: string; on?: boolean; art: ReactNode }[][] = [
  [{ name: "Включить прилипание", on: true, art: <SnapArt /> }],
  [
    { name: "Прилипать к рамкам", art: <SnapArt /> },
    { name: "К краям рамки", art: <path d="M3 23H21M20.500 22V1" stroke="#3d7a45" strokeWidth="1.400" strokeDasharray="2.600 1.600" /> },
    { name: "К углам рамки", art: <><path d="M1 20.500H20M20 20V1" stroke="#333" strokeWidth="1.300" strokeDasharray="2.600 1.600" /><path d="M20 17L23.200 20.500L20 24L16.800 20.500Z" fill="#a9b4a8" stroke="#3d6a45" strokeWidth="1.200" /></> },
    { name: "К серединам рёбер", art: <><path d="M1 21.500H20M19.500 21V1" stroke="#444" strokeWidth="1.300" strokeDasharray="2.600 1.600" /><path d="M19 4L22.200 7.500L19 11L15.800 7.500Z" fill="#a9b4a8" stroke="#3d6a45" strokeWidth="1.200" /></> },
    { name: "К центру рамки", art: <><path d="M2 21.500H20.500M20.500 21V2" stroke="#444" strokeWidth="1.300" strokeDasharray="2.600 1.600" /><circle cx="7" cy="8.500" r="2.800" fill="#c0c8c0" stroke="#3d7a45" strokeWidth="1.200" /></> },
  ],
  [
    { name: "Прилипать к узлам", on: true, art: <SnapArt /> },
    { name: "К контурам", art: <path d={curve} stroke="#1c8c28" strokeWidth="1.700" /> },
    { name: "К пересечениям", art: <><path d="M2 22L23 2M2 15L23 9" stroke="#555" strokeWidth="1.300" /><circle cx="12.500" cy="12" r="3" fill="#7a9aa8" stroke="#1c8c28" strokeWidth="1.600" /></> },
    { name: "К острым узлам", on: true, art: <><path d={curve} stroke="#666" strokeWidth="1.200" /><path d="M12 15L16 19L12 23.500L8 19Z" fill="#8c9ae0" stroke="#1c8c28" strokeWidth="1.700" /></> },
    { name: "К сглаженным узлам", art: <><path d={curve} stroke="#666" strokeWidth="1.200" /><rect x="9.500" y="2" width="5.500" height="5.500" fill="#9aa8e0" stroke="#1c8c28" strokeWidth="1.500" /></> },
    { name: "К серединам линий", art: <><path d="M1.500 24L23 1" stroke="#444" strokeWidth="1.200" /><path d="M4.500 15L7 22.500M7.500 13L10 20.500M15.500 4L18 11M19 1L21.500 8M3 20L10 16M14.500 9L22.500 4" stroke="#d42a2a" strokeWidth="1.700" /><circle cx="12.500" cy="12.500" r="3" fill="#7a9aa8" stroke="#1c8c28" strokeWidth="1.500" /></> },
  ],
  [
    { name: "Прилипать к прочим точкам", on: true, art: <SnapArt /> },
    { name: "К центрам объектов", art: <><path d="M1 22.500H20.500V2.500" stroke="#888" strokeWidth="1.500" /><circle cx="9.500" cy="10.500" r="2.800" fill="#b5d5b5" stroke="#1c8c28" strokeWidth="1.500" /></> },
    { name: "К центрам вращения", art: <><path d="M2 22.500H20.500M20.500 22V2" stroke="#333" strokeWidth="1.600" strokeDasharray="2.500 1.500" /><path d="M4 10.500H14M9 6V15" stroke="#444" strokeWidth="1.800" /></> },
    { name: "К линии шрифта", art: <><text x="3" y="20" fontFamily="DejaVu Sans" fontWeight="700" fontStyle="italic" fontSize="25" fill="#111">A</text><path d="M6 21.500H23.500" stroke="#1c8c28" strokeWidth="1.300" /><path d="M4.500 17.500L8 21L4.500 24.500L1 21Z" fill="#a9c0e8" stroke="#1c8c28" strokeWidth="1.400" /></> },
  ],
  [
    { name: "К границе страницы", art: <rect x="3.500" y="1.500" width="17" height="21" fill="url(#g-page)" stroke="#333" strokeWidth="1.300" /> },
    { name: "К сетке", on: true, art: <path d="M3 1V23.500M9 1V23.500M15 1V23.500M21 1V23.500M1 4H24M1 10H24M1 15.500H24M1 21.500H24" stroke="#1d1df2" strokeWidth="1.400" /> },
    { name: "К направляющим", on: true, art: <path d="M2.500 1V23.500M20.500 1V23.500M9 23.500L17.500 1" stroke="#1d1df2" strokeWidth="1.700" /> },
  ],
];

function SnapBar() {
  return (
    <aside className="flex w-[72px] shrink-0 flex-col pt-1" aria-label="Прилипание">
      {snaps.map((g, i) => (
        <div key={i}>
          {i > 0 && <SideDivider />}
          {g.map((s) => (
            <div key={s.name} className="flex h-[58px] items-center justify-center pr-0.5">
              <button
                aria-label={s.name}
                aria-pressed={!!s.on}
                className={
                  s.on
                    ? "flex h-[53px] w-[54px] items-center justify-center rounded-lg border-2 border-[#b9b9b6] bg-[#d7d7d5]"
                    : "flex h-[53px] w-[54px] items-center justify-center"
                }
              >
                <Icon className="size-[38px]">{s.art}</Icon>
              </button>
            </div>
          ))}
        </div>
      ))}
    </aside>
  );
}

/* ---------- palette and status bar ---------- */

const palette =
  "1b1f5a 262b80 3038af e8e8f2 8f90d0 3038af f5e5e5 cc8182 a51d20 e8eee5 8aa57b 2a5c0c e3e3e3 e0e0f3 ffffff 000000 c3c2e8 cdccec d6d5ef eae9f5 d6d5ef 6869c1 f8e6e6 f4cdce dc2a2c e7f0e4 d2e5cb 3b8214 e3e3e3 e0e0f3 ffffff 000000 3f4a73 414f76 43527a 5566a0 7583b2 b3b8cb cc8182 b92124 8aa57b 3a7f10 ffffff cccccc a8a8a8 999999 828282 4d4d4d 000000 00082f 000a42 000c58 001078 001070 000c5c 6f6fb8 bfbffb 1b248e 3f3d5e df8d86 c74334 a0df67 68b528 e8e283 d9cf2e ffffff 000000 404040 808080 999999 cccccc ffffff a8a8a8 828282 dc8f8f b92124 9bbe87 3a7f10 999cd7 3038af b2b2b2 bebebe".split(" ");

function Palette() {
  return (
    <div className="relative flex h-[35px] shrink-0">
      <button aria-label="Нет цвета" className="w-[31px] bg-white">
        <svg viewBox="0 0 31 31" className="size-[31px]" aria-hidden="true"><path d="M2 0L29 31M29 0L2 31" stroke="#7c1a1a" strokeWidth="3" /></svg>
      </button>
      <div className="flex flex-1">
        {palette.map((c, i) => (
          <button key={i} aria-label={"#" + c} className="flex-1" style={{ backgroundColor: "#" + c }} />
        ))}
      </div>
      <button aria-label="Палитры" className="flex w-[27px] justify-center">
        <svg viewBox="0 0 11 22" className="h-[22px] w-[11px]" aria-hidden="true"><path d="M11 0V22L0 11Z" fill={INK} /></svg>
      </button>
      <div className="absolute top-[30px] left-0 h-[7px] w-[59.74%] bg-[#4a90d9]" />
    </div>
  );
}

function StatusBar() {
  return (
    <footer className="flex h-[70px] shrink-0 items-center border-b-4 border-[#b3b3b1] text-2xl">
      <dl className="grid w-[262px] shrink-0 grid-cols-[164px_1fr] pb-1 leading-[34px] font-medium">
        <dt>Заливка:</dt><dd>Н/Д</dd>
        <dt>Обводка:</dt><dd>Н/Д</dd>
      </dl>
      <label htmlFor="fill-opacity" className="w-[29px] font-medium">Н:</label>
      <Spin id="fill-opacity" value="0" width="w-[94px]" />
      <button aria-label="Видимость слоя" className="ml-6">
        <svg viewBox="0 0 28 28" className="size-7" fill="none" stroke="#222" strokeWidth="1.500" aria-hidden="true">
          <path d="M1 16C7 8 21 8 27 16C21 25 7 25 1 16Z" fill="#fff" />
          <circle cx="14" cy="16" r="5.500" fill="#222" />
          <circle cx="16" cy="13.500" r="1.700" fill="#fff" stroke="none" />
          <path d="M4 12L2 8M8 9L6 5M14 8V2M20 9L22 5M24 12L26 8M11 8L10 4M17 8L18 4" />
        </svg>
      </button>
      <button aria-label="Заблокировать слой" className="ml-7"><Lock /></button>
      <div className="relative ml-[18px] h-[60px] w-[193px] shrink-0">
        <select aria-label="Слой" className="size-full appearance-none rounded-lg border-2 border-[#b3b3af] bg-linear-to-b from-[#ededeb] to-[#cfcfcc] pl-4 text-2xl font-semibold">
          <option>•Layer 1</option>
        </select>
        <span className="pointer-events-none absolute top-2 right-12 h-11 w-0.5 bg-[#f2f2f0]" />
        <svg viewBox="0 0 20 11" className="pointer-events-none absolute top-6 right-[22px] h-[11px] w-5" aria-hidden="true"><path d="M0 0H20L10 11Z" fill={INK} /></svg>
      </div>
      <p className="ml-1 flex-1 truncate text-[29px] font-semibold">
        Нет выделенных объектов. Используйте щелчок, Shift+щелчок, Alt+прокрутка колесом мыши, либо обведите объект…
      </p>
      <dl className="grid w-[147px] shrink-0 grid-cols-[42px_1fr] pb-1 leading-[34px] font-medium">
        <dt>X:</dt><dd className="font-['DejaVu_Sans_Mono',monospace]">160,07</dd>
        <dt>Y:</dt><dd className="font-['DejaVu_Sans_Mono',monospace]">292,55</dd>
      </dl>
      <label htmlFor="zoom" className="w-7 shrink-0 font-medium">Z:</label>
      <div className="mr-[3px] shrink-0"><Spin id="zoom" value="140%" width="w-[113px]" active /></div>
    </footer>
  );
}

const menu = ["Файл", "Правка", "Вид", "Слой", "Объект", "Контур", "Текст", "Фильтры", "Расширения", "Справка"];

export default function App() {
  return (
    <div className="flex min-h-screen flex-col bg-[#e8e8e6] font-['Noto_Sans','Open_Sans',sans-serif] text-[#3a4042]">
      <Gradients />
      <header className="relative flex h-12 shrink-0 items-center border-t-2 border-[#6b6b69] bg-[#444] text-[#dfdbd6]">
        <div className="flex items-center gap-7 pl-3.5">
          <button aria-label="Закрыть"><svg viewBox="0 0 18 18" className="size-[18px]" aria-hidden="true"><path d="M2 1L16 17M16 1L2 17" stroke="currentColor" strokeWidth="4" /></svg></button>
          <button aria-label="Свернуть"><svg viewBox="0 0 18 18" className="size-[18px]" aria-hidden="true"><path d="M0 16H18" stroke="currentColor" strokeWidth="4" /></svg></button>
          <button aria-label="Развернуть"><svg viewBox="0 0 18 18" className="size-[18px]" aria-hidden="true"><rect x="2" y="2" width="14" height="14" fill="none" stroke="currentColor" strokeWidth="4" /></svg></button>
        </div>
        <h1 className="pointer-events-none absolute inset-0 flex items-center justify-center pr-1 pb-1 text-[27px] font-bold">*Новый документ 2 - Inkscape</h1>
      </header>
      <nav className="flex h-[52px] shrink-0 items-center gap-[35px] border-b-2 border-[#d6d6d3] pl-[13px] text-[29px] font-semibold">
        {menu.map((m) => <button key={m}>{m}</button>)}
      </nav>
      <ControlsBar />
      <main className="relative flex flex-1">
        <Toolbox />
        <div className="mr-[9px] flex min-w-0 flex-1 flex-col">
          <TopRuler />
          <div className="flex flex-1">
            <SideRuler />
            <div className="flex-1 bg-white" />
          </div>
        </div>
        <DockPanel />
        <CommandBar />
        <SnapBar />
        <Drawing />
      </main>
      <Palette />
      <StatusBar />
    </div>
  );
}
